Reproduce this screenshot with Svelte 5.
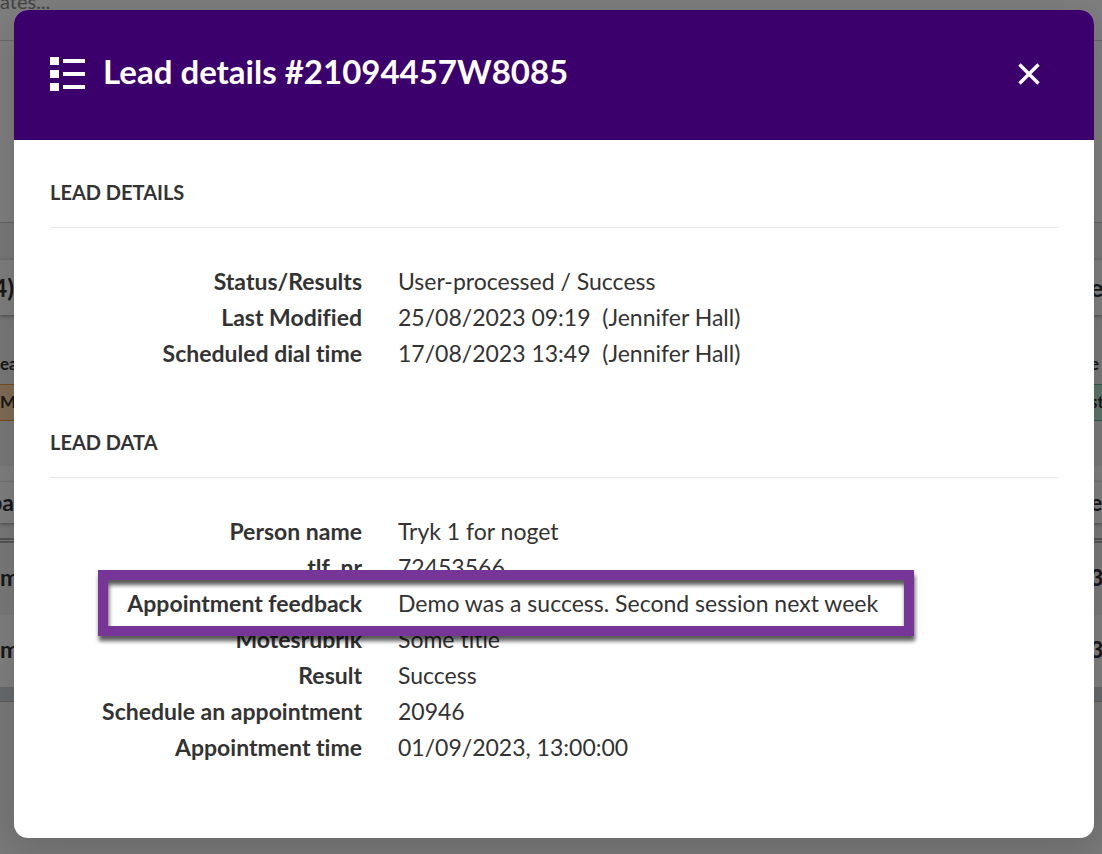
<script lang="ts">
  type Row = { label: string; value: string; marked?: boolean };

  const sections: { title: string; rows: Row[] }[] = [
    {
      title: "Lead details",
      rows: [
        { label: "Status/Results", value: "User-processed / Success" },
        { label: "Last Modified", value: "25/08/2023 09:19\u00a0 (Jennifer Hall)" },
        { label: "Scheduled dial time", value: "17/08/2023 13:49\u00a0 (Jennifer Hall)" }
      ]
    },
    {
      title: "Lead data",
      rows: [
        { label: "Person name", value: "Tryk 1 for noget" },
        { label: "tlf_nr", value: "72453566" },
        {
          label: "Appointment feedback",
          value: "Demo was a success. Second session next week",
          marked: true
        },
        { label: "Motesrubrik", value: "Some title" },
        { label: "Result", value: "Success" },
        { label: "Schedule an appointment", value: "20946" },
        { label: "Appointment time", value: "01/09/2023, 13:00:00" }
      ]
    }
  ];

  let open = $state(true);
</script>

<div class="page">
  <div class="backdrop-page" aria-hidden="true">
    <div class="search">ates...</div>
    <div class="intro"></div>
    <div class="space"></div>
    <div class="band heading"><span>4)</span><span>ea</span></div>
    <div class="band labels"><span>ea</span><span>e</span></div>
    <div class="band chips"><span>Mi</span><span>st</span></div>
    <div class="space tall"></div>
    <div class="strip"></div>
    <div class="band columns"><span>pa</span><span>e</span></div>
    <div class="rule"></div>
    <div class="band record odd"><span>m</span><span>3</span></div>
    <div class="band record"><span>m</span><span>3</span></div>
    <div class="scrollbar"></div>
  </div>

  {#if open}
    <div class="overlay">
      <div class="modal" role="dialog" aria-modal="true" aria-labelledby="modal-title">
        <header>
          <svg class="list-icon" viewBox="0 0 35 34" aria-hidden="true">
            <path
              fill="#fff"
              d="M0 0h9v8H0zM0 13h9v8H0zM0 26h9v8H0zM13 2h22v4H13zM13 15h22v4H13zM13 28h22v4H13z"
            />
          </svg>
          <h1 id="modal-title">Lead details #21094457W8085</h1>
          <button type="button" aria-label="Close" onclick={() => (open = false)}>
            <svg viewBox="0 0 22 22" aria-hidden="true">
              <path d="M1.5 1.5l19 19M20.5 1.5l-19 19" stroke="#fff" stroke-width="3.4" />
            </svg>
          </button>
        </header>

        <div class="body">
          {#each sections as section}
            <section>
              <h2>{section.title}</h2>
              <dl>
                {#each section.rows as row}
                  <div class="row" class:marked={row.marked}>
                    <dt>{row.label}</dt>
                    <dd>{row.value}</dd>
                  </div>
                {/each}
              </dl>
            </section>
          {/each}
        </div>
      </div>
    </div>
  {/if}
</div>

<style>
  :global(body) {
    margin: 0;
    font-family: Lato, "Open Sans", sans-serif;
    font-variant-ligatures: none;
    color: #333;
  }

  .page {
    position: relative;
    min-height: 100vh;
    overflow: hidden;
    background: #f2f2f2;
  }

  .backdrop-page {
    position: absolute;
    inset: 0;
    overflow: hidden;
  }

  .search {
    box-sizing: border-box;
    height: 41px;
    border-bottom: 1px solid #d0d0d0;
    background: #fff;
    color: #888;
    font-size: 20px;
    line-height: 2px;
  }

  .intro {
    box-sizing: border-box;
    height: 182px;
    border-bottom: 1px solid #c8c8c8;
    background: #fff;
  }

  .space {
    height: 37px;
  }

  .space.tall {
    height: 45px;
  }

  .band {
    display: flex;
    justify-content: space-between;
    box-sizing: border-box;
    font-weight: 700;
  }

  .band span {
    display: flex;
    width: 14px;
    white-space: nowrap;
  }

  .band span:last-child {
    width: 12px;
  }

  .heading {
    height: 55px;
    background: #fff;
    box-shadow: 0 1px 4px #0006;
    font-size: 25px;
    line-height: 54px;
  }

  .heading span:first-child,
  .columns span:first-child {
    justify-content: flex-end;
  }

  .labels {
    height: 69px;
    padding-top: 34px;
    font-size: 17px;
    line-height: 30px;
  }

  .chips {
    height: 37px;
    font-size: 17px;
    line-height: 34px;
  }

  .chips span {
    box-sizing: border-box;
    border: solid #e89a35;
    border-width: 1px 0;
    background: #ffd9ab;
  }

  .chips span:last-child {
    border-color: #57b89a;
    background: #b9e8d5;
  }

  .strip {
    height: 16px;
    background: #fff;
  }

  .columns {
    height: 41px;
    background: #fff;
    box-shadow: 0 1px 4px #0006;
    font-size: 23px;
    line-height: 40px;
  }

  .rule {
    height: 1px;
    margin-top: 15px;
    border: solid #aaa;
    border-width: 2px 0;
  }

  .record {
    height: 72px;
    background: #fff;
    font-size: 23px;
    line-height: 68px;
  }

  .record.odd {
    background: #f5f5f5;
  }

  .scrollbar {
    height: 14px;
    border-bottom: 1px solid #bbb;
    background: #cfd5d9;
  }

  .overlay {
    position: relative;
    box-sizing: border-box;
    min-height: 100vh;
    padding: 10px 8px 16px 14px;
    background: rgba(0, 0, 0, 0.5);
  }

  .modal {
    overflow: hidden;
    border-radius: 14px;
    background: #fff;
    box-shadow: 0 8px 40px rgba(0, 0, 0, 0.16);
  }

  header {
    display: flex;
    align-items: center;
    gap: 18px;
    box-sizing: border-box;
    height: 130px;
    padding: 0 48px 2px 36px;
    background: #3b006b;
    color: #fff;
  }

  .list-icon {
    width: 35px;
    height: 34px;
  }

  h1 {
    flex: 1;
    margin: 0;
    padding-bottom: 6px;
    font-size: 33px;
    line-height: 40px;
  }

  button {
    display: grid;
    padding: 6px;
    border: 0;
    background: none;
    cursor: pointer;
  }

  button svg {
    width: 22px;
    height: 22px;
  }

  .body {
    display: grid;
    gap: 54px;
    padding: 36px 36px 72px;
  }

  h2 {
    margin: 0 0 36px;
    padding-bottom: 19px;
    border-bottom: 1px solid #e7e7e7;
    font-size: 20px;
    line-height: 32px;
    text-transform: uppercase;
  }

  dl {
    margin: 0;
  }

  .row {
    position: relative;
    display: grid;
    grid-template-columns: 312px 1fr;
    gap: 36px;
    padding-bottom: 2px;
    font-size: 23px;
    line-height: 34px;
  }

  dt {
    font-weight: 700;
    text-align: right;
  }

  dd {
    margin: 0;
  }

  /* frame drawn round the row, over its neighbours */
  .marked::after {
    content: "";
    position: absolute;
    z-index: 1;
    inset: -16px 144px -14px 48px;
    border: 10px solid #773597;
    filter: drop-shadow(1px 5px 2px rgba(0, 0, 0, 0.65));
  }
</style>
